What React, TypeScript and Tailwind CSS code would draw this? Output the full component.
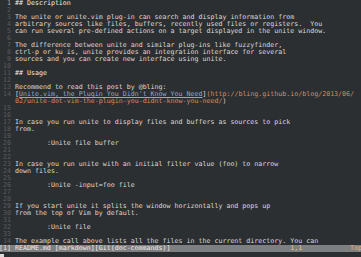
import React from "react";

type Seg = { t: string; c?: string; u?: boolean };
type Row = { n?: number; segs: Seg[]; cur?: boolean };

const txt = "text-[#dadada]";

const plain = (n: number, s: string): Row => ({ n, segs: [{ t: s }] });

const rows: Row[] = [
  { n: 1, segs: [{ t: "## Description", c: "text-[#ececec]" }], cur: true },
  plain(2, ""),
  plain(3, "The unite or unite.vim plug-in can search and display information from"),
  plain(4, "arbitrary sources like files, buffers, recently used files or registers.  You"),
  plain(5, "can run several pre-defined actions on a target displayed in the unite window."),
  plain(6, ""),
  plain(7, "The difference between unite and similar plug-ins like fuzzyfinder,"),
  plain(8, "ctrl-p or ku is, unite provides an integration interface for several"),
  plain(9, "sources and you can create new interface using unite."),
  plain(10, ""),
  { n: 11, segs: [{ t: "## Usage", c: "text-[#ececec]" }] },
  plain(12, ""),
  plain(13, "Recommend to read this post by @bling:"),
  {
    n: 14,
    segs: [
      { t: "[" },
      { t: "Unite.vim, the Plugin You Didn't Know You Need", c: "text-[#88abdb]", u: true },
      { t: "]" },
      { t: "(http://bling.github.io/blog/2013/06/", c: "text-[#d98b5c]" },
    ],
  },
  {
    segs: [
      { t: "02/unite-dot-vim-the-plugin-you-didnt-know-you-need/", c: "text-[#d98b5c]" },
      { t: ")" },
    ],
  },
  plain(15, ""),
  plain(16, ""),
  plain(17, "In case you run unite to display files and buffers as sources to pick"),
  plain(18, "from."),
  plain(19, ""),
  plain(20, "        :Unite file buffer"),
  plain(21, ""),
  plain(22, ""),
  plain(23, "In case you run unite with an initial filter value (foo) to narrow"),
  plain(24, "down files."),
  plain(25, ""),
  plain(26, "        :Unite -input=foo file"),
  plain(27, ""),
  plain(28, ""),
  plain(29, "If you start unite it splits the window horizontally and pops up"),
  plain(30, "from the top of Vim by default."),
  plain(31, ""),
  plain(32, "        :Unite file"),
  plain(33, ""),
  plain(34, "The example call above lists all the files in the current directory. You can"),
];

function pad(s: string, col: number) {
  return s.length >= col ? s + " " : s + " ".repeat(col - s.length);
}

export default function App() {
  const left = "[1] README.md [markdown][Git(doc-commands)]";
  const statusLeft = pad(left, 73);
  const mid = pad("1,1", 15);
  return (
    <div className="w-[361px] h-[257px] overflow-hidden bg-[#2c2f31]">
      <div className="ml-[-1px] font-['DejaVu_Sans_Mono',monospace] text-[6.64px] leading-[7px]">
        {rows.map((r, i) => (
          <div key={i} className="h-[7px] whitespace-pre flex">
            <span
              className={
                "w-[16px] shrink-0 " +
                (r.cur ? "text-[#a8a8a8]" : "text-[#595d60]")
              }
            >
              {r.n !== undefined ? String(r.n).padStart(3, " ") + " " : "    "}
            </span>
            <span className={txt}>
              {r.segs.map((s, j) => (
                <span
                  key={j}
                  className={(s.c ?? "") + (s.u ? " underline" : "")}
                >
                  {s.t}
                </span>
              ))}
            </span>
          </div>
        ))}
        <div className="h-[7px] whitespace-pre bg-[#7d7f81] text-[#f2eaea] w-[380px]">
          {statusLeft}
          <span className="text-[#e6c590]">{mid}</span>
          <span className="text-[#e6b27a]">Top</span>
        </div>
        <div className="h-[7px] flex items-end">
          <div className="ml-[1px] w-[4px] h-[5px] bg-[#dcdcdc]" />
        </div>
      </div>
    </div>
  );
}
